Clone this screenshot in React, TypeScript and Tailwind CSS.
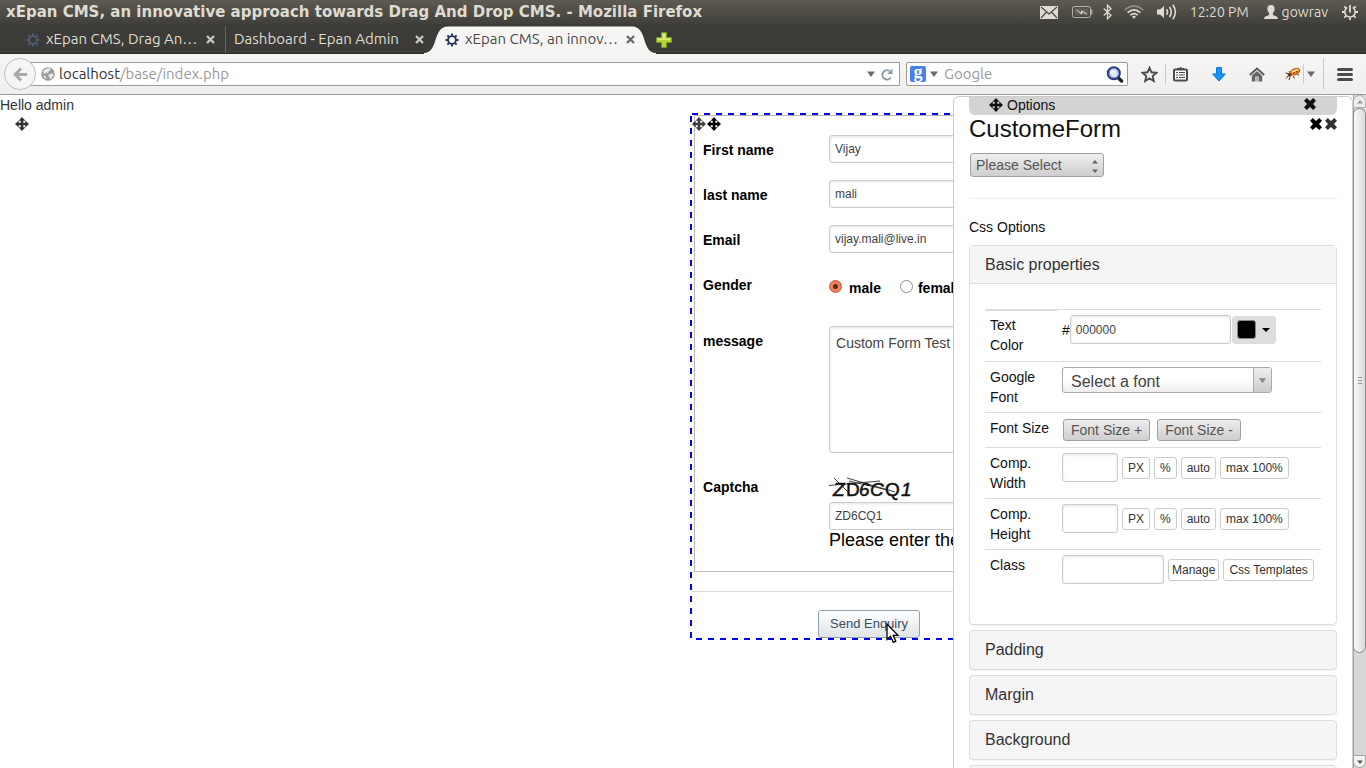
import React from 'react';

const UI_FONT = "font-['Ubuntu','Noto_Sans',sans-serif]";

/* ---------- Icons ---------- */

function MoveIcon({ className = '' }: { className?: string }) {
  return (
    <svg className={className} width="14" height="14" viewBox="0 0 14 14" fill="currentColor" aria-hidden="true">
      <path d="M7 0 10.500 3.700H8.300V5.700H10.300V3.500L14 7 10.300 10.500V8.300H8.300V10.300H10.500L7 14 3.500 10.300H5.700V8.300H3.700V10.500L0 7 3.700 3.500V5.700H5.700V3.700H3.500Z" />
    </svg>
  );
}

function RemoveIcon({ className = '' }: { className?: string }) {
  return (
    <svg className={className} width="12" height="12" viewBox="0 0 12 12" fill="currentColor" aria-hidden="true">
      <path d="M2.800 0 6 3 9.200 0 12 2.700 9 6 12 9.300 9.200 12 6 9 2.800 12 0 9.300 3 6 0 2.700Z" />
    </svg>
  );
}

function TabClose({ color }: { color: string }) {
  return (
    <svg width="9" height="9" viewBox="0 0 9 9" stroke={color} strokeWidth="2.4" aria-hidden="true">
      <path d="M1 1 8 8M8 1 1 8" />
    </svg>
  );
}

function GearIcon({ color }: { color: string }) {
  return (
    <svg width="14" height="14" viewBox="0 0 14 14" fill="none" stroke={color} aria-hidden="true">
      <circle cx="7" cy="7" r="3.9" strokeWidth="1.9" />
      <path
        strokeWidth="2"
        d="M7 .5V3M7 11v2.500M.5 7H3M11 7h2.500M2.400 2.400 4.200 4.200M9.800 9.800l1.800 1.800M2.400 11.600 4.200 9.800M9.800 4.200l1.800-1.800"
      />
    </svg>
  );
}

function Caret({ color = '#6b6b6b', size = 7 }: { color?: string; size?: number }) {
  return (
    <svg width={size} height={size} viewBox="0 0 8 8" fill={color} aria-hidden="true">
      <path d="M0 1.500H8L4 7Z" />
    </svg>
  );
}

function MailIcon() {
  return (
    <svg width="18" height="13" viewBox="0 0 18 13" aria-hidden="true">
      <rect width="18" height="13" fill="#dfdbd2" />
      <path d="M1 1 9 8 17 1M1 12 6.500 6M17 12 11.500 6" fill="none" stroke="#4b4943" strokeWidth="1.200" />
    </svg>
  );
}

function BatteryIcon() {
  return (
    <svg width="21" height="12" viewBox="0 0 21 12" fill="none" stroke="#dfdbd2" aria-hidden="true">
      <rect x=".5" y=".5" width="18" height="11" rx="2" strokeOpacity=".7" />
      <rect x="2.500" y="2.500" width="14" height="7" fill="#8a877f" stroke="none" opacity=".35" />
      <path d="M19.500 3.500v5" strokeWidth="2" strokeOpacity=".6" />
      <path d="M4.500 4 9 7.200 9.800 4.800 15 8.200 10.500 5.600 9.700 8Z" fill="#f5f2ea" strokeWidth=".6" />
    </svg>
  );
}

function BluetoothIcon() {
  return (
    <svg width="9" height="16" viewBox="0 0 9 16" fill="none" stroke="#dfdbd2" strokeWidth="1.300" aria-hidden="true">
      <path d="M.7 4.500 8 11.300 4.500 14.800V1.200L8 4.700.7 11.500" />
    </svg>
  );
}

function WifiIcon() {
  return (
    <svg width="20" height="14" viewBox="0 0 20 14" fill="none" stroke="#dfdbd2" strokeWidth="1.700" aria-hidden="true">
      <path d="M.8 5Q10-3 19.200 5" strokeOpacity=".4" />
      <path d="M3.600 7.600Q10 2 16.400 7.600" />
      <path d="M6.300 10.200Q10 7 13.700 10.200" />
      <path d="M8 11.500Q10 10 12 11.500L10 13.800Z" fill="#dfdbd2" stroke="none" />
    </svg>
  );
}

function SoundIcon() {
  return (
    <svg width="20" height="16" viewBox="0 0 20 16" fill="none" stroke="#dfdbd2" strokeWidth="1.600" aria-hidden="true">
      <path d="M0 5.500H3L7 2V14L3 10.500H0Z" fill="#dfdbd2" stroke="none" />
      <path d="M9.500 5.300Q11.500 8 9.500 10.700M12.500 3Q16 8 12.500 13M15.800.8Q21 8 15.800 15.200" />
    </svg>
  );
}

function PersonIcon() {
  return (
    <svg width="14" height="14" viewBox="0 0 14 14" fill="#dfdbd2" aria-hidden="true">
      <path d="M7 0C9.600 0 10.600 1.500 10.600 3.700 10.600 5.800 9.900 7 8.900 8V9.800C9.700 10.800 14 10.800 14 14H0C0 10.800 4.300 10.800 5.100 9.800V8C4.100 7 3.400 5.800 3.400 3.700 3.400 1.500 4.400 0 7 0Z" />
    </svg>
  );
}

function PowerGearIcon() {
  return (
    <svg width="16" height="16" viewBox="0 0 16 16" fill="none" stroke="#dfdbd2" aria-hidden="true">
      <path d="M5.300 3.400A5.200 5.200 0 1 0 10.700 3.400" strokeWidth="1.600" />
      <path d="M8 1V8.500" strokeWidth="1.800" />
      <path
        d="M0 8H2.500M13.500 8H16M8 13.500V16M2.300 2.300 4.400 4.400M11.600 4.400 13.700 2.300M2.300 13.700 4.200 11.800M11.800 11.800 13.700 13.700"
        strokeWidth="1.800"
      />
    </svg>
  );
}

function PlusIcon() {
  return (
    <svg width="16" height="16" viewBox="0 0 16 16" aria-hidden="true">
      <path d="M5.500.5h5v5h5v5h-5v5h-5v-5h-5v-5h5Z" fill="#b5d334" stroke="#6d9a1f" />
      <path d="M6.500 1.500h3v5h5v1.500h-13v-1.500h5Z" fill="#dcea7d" />
    </svg>
  );
}

function GlobeIcon() {
  return (
    <svg width="14" height="14" viewBox="0 0 14 14" aria-hidden="true">
      <circle cx="7" cy="7" r="6.800" fill="#9a9a9a" />
      <path d="M5.500 1.500 9 1l1 1.500L8 4 7 6 5 5.500 4 7 2.500 6 2 4ZM8.500 7 12 6.500 12.500 8 10 12 9 12.500 8.500 10 7 9ZM2 8.500 4.500 9 5.500 12 3.500 11Z" fill="#e9e9e9" />
    </svg>
  );
}

function ReloadIcon() {
  return (
    <svg width="12" height="13" viewBox="0 0 12 13" fill="none" aria-hidden="true">
      <path d="M9.800 9.500A4.600 4.600 0 1 1 8.500 3" stroke="#8e9ba8" strokeWidth="2" />
      <path d="M11.500.5V6H6Z" fill="#8e9ba8" />
    </svg>
  );
}

function MagnifierIcon() {
  return (
    <svg width="18" height="17" viewBox="0 0 18 17" fill="none" aria-hidden="true">
      <path d="M12 11.500 15.500 15" stroke="#222" strokeWidth="3.500" strokeLinecap="round" />
      <circle cx="7.800" cy="7.200" r="6" fill="#e4e9f7" stroke="#27357f" strokeWidth="2" />
      <circle cx="7.800" cy="7.200" r="4.500" stroke="#7d8fd0" strokeWidth="1.200" />
      <path d="M5.500 7A2.500 2.500 0 0 1 8 4.700" stroke="#fff" strokeWidth="1.300" />
    </svg>
  );
}

function StarIcon() {
  return (
    <svg width="17" height="17" viewBox="0 0 17 17" fill="none" stroke="#4c4c4c" strokeWidth="1.900" aria-hidden="true">
      <path d="M8.500 1.800 10.500 6.300 15.400 6.800 11.700 10.100 12.800 15 8.500 12.400 4.200 15 5.300 10.100 1.600 6.800 6.500 6.300Z" />
    </svg>
  );
}

function ListIcon() {
  return (
    <svg width="15" height="16" viewBox="0 0 15 16" aria-hidden="true">
      <rect x="1" y="3.500" width="13" height="11" rx="1" fill="#fff" stroke="#4c4c4c" strokeWidth="2" />
      <path d="M4 4V2H6Q7.500 0 9 2h2V4Z" fill="#4c4c4c" />
      <path d="M3 6.500H5M3 9H5M3 11.500H5M6 6.500h6M6 9h6M6 11.500h6" stroke="#4c4c4c" strokeWidth="1.200" />
    </svg>
  );
}

function DownloadIcon() {
  return (
    <svg width="14" height="15" viewBox="0 0 14 15" aria-hidden="true">
      <path d="M4.500.6h5v6.400h3.800L7 14 .7 7h3.800Z" fill="#1793ff" stroke="#0b76d8" />
    </svg>
  );
}

function HomeIcon() {
  return (
    <svg width="16" height="15" viewBox="0 0 16 15" aria-hidden="true">
      <path d="M.8 8 8 1.500 15.200 8" fill="none" stroke="#555" strokeWidth="1.700" />
      <path d="M2.800 8.700 8 4.100 13.200 8.700V14.500H9.600V9.500H6.400V14.500H2.800Z" fill="#666" />
      <path d="M8 9.500V14.500" stroke="#777" />
    </svg>
  );
}

function BugIcon() {
  return (
    <svg width="16" height="14" viewBox="0 0 16 14" fill="none" aria-hidden="true">
      <path d="M3 9 1 11.500M5 10 4 13M8 9 9.500 11.500M3 6.500.5 6M5 5.500 4 4M12 7l2 1.500" stroke="#3d2a1a" strokeWidth=".9" />
      <ellipse cx="10" cy="4.700" rx="5.200" ry="3" transform="rotate(-22 10 4.700)" fill="#f08a1d" stroke="#a8480c" strokeWidth=".7" />
      <path d="M7 5 13 2.500" stroke="#ffe08a" strokeWidth="1.600" />
      <circle cx="9" cy="6" r=".8" fill="#5b2c12" />
      <circle cx="12" cy="4.800" r=".8" fill="#5b2c12" />
      <circle cx="4.600" cy="7.800" r="2" fill="#6a3011" />
    </svg>
  );
}

/* ---------- Browser chrome ---------- */

function TitleBar() {
  return (
    <header
      className={`flex h-6 shrink-0 items-center justify-between bg-linear-to-b from-[#5d5b51] to-[#403f3a] pr-2 pl-1.5 text-sm text-[#dfdbd2] ${UI_FONT}`}
    >
      <h1 className="truncate font-['DejaVu_Sans',sans-serif] text-[15px] leading-6 font-bold">
        xEpan CMS, an innovative approach towards Drag And Drop CMS. - Mozilla Firefox
      </h1>
      <div className="flex shrink-0 items-center">
        <span className="mr-3.5"><MailIcon /></span>
        <span className="mr-2.5"><BatteryIcon /></span>
        <span className="mr-3"><BluetoothIcon /></span>
        <span className="mr-[13px]"><WifiIcon /></span>
        <span className="mr-[13px]"><SoundIcon /></span>
        <span className="mr-[15px]">12:20 PM</span>
        <span className="mr-1"><PersonIcon /></span>
        <span className="mr-3.5">gowrav</span>
        <PowerGearIcon />
      </div>
    </header>
  );
}

function TabBar() {
  return (
    <nav
      aria-label="Tabs"
      className={`flex h-[30px] shrink-0 items-center border-b border-[#2c2b28] bg-[#3c3b37] pt-[2px] text-[15px] text-[#dfdbd2] ${UI_FONT}`}
    >
      <div className="flex h-full w-[226px] items-center border-r border-[#66655d] pr-2.5 pl-[26px]">
        <span className="opacity-60"><GearIcon color="#5d739c" /></span>
        <a href="#cms" className="ml-1.5 flex-1 truncate">xEpan CMS, Drag An…</a>
        <button aria-label="Close tab"><TabClose color="#c9c6bd" /></button>
      </div>
      <div className="flex h-full w-[198px] items-center pl-2">
        <a href="#dashboard" className="flex-1 truncate">Dashboard - Epan Admin</a>
        <button aria-label="Close tab"><TabClose color="#c9c6bd" /></button>
      </div>
      <div className="relative flex h-full w-[232px] items-center pr-[21px] pl-[21px] text-[#4a4a48]">
        <svg
          className="absolute top-0 left-0 h-7 w-full"
          viewBox="0 0 232 28"
          preserveAspectRatio="none"
          aria-hidden="true"
        >
          <path d="M0 28V27C15 27 8 .5 24 .5H208C224 .5 217 27 232 27V28Z" fill="#f6f5f4" />
        </svg>
        <span className="relative"><GearIcon color="#2d3a56" /></span>
        <a href="#innovative" className="relative ml-1.5 flex-1 truncate">xEpan CMS, an innov…</a>
        <button aria-label="Close tab" className="relative"><TabClose color="#6b6a66" /></button>
      </div>
      <button aria-label="New tab"><PlusIcon /></button>
    </nav>
  );
}

function NavBar() {
  return (
    <div
      className={`flex h-[41px] shrink-0 items-center border-b border-[#9b9a97] bg-linear-to-b from-[#f6f5f4] to-[#f0efed] pr-[13px] pl-1 text-[15px] ${UI_FONT}`}
    >
      <button
        aria-label="Back"
        className="z-10 flex size-8 shrink-0 items-center justify-center rounded-full border border-[#b9c0c8] bg-[#f5f5f4]"
      >
        <svg width="15" height="15" viewBox="0 0 15 15" fill="none" stroke="#a8a8a8" strokeWidth="3" aria-hidden="true">
          <path d="M8 1.500 2.200 7.500 8 13.500M2.500 7.500H14" />
        </svg>
      </button>
      <div className="-ml-2 flex h-6 min-w-0 flex-1 items-center border border-[#9b9a97] bg-white pr-1.5 pl-3">
        <GlobeIcon />
        <span className="ml-1 flex-1 text-[#9a9a9a]">
          <span className="text-[#333]">localhost</span>/base/index.php
        </span>
        <span className="mr-1.5"><Caret size={8} /></span>
        <button aria-label="Reload"><ReloadIcon /></button>
      </div>
      <div className="ml-1.5 flex h-6 w-[222px] shrink-0 items-center rounded-xs border border-[#9b9a97] bg-white px-[3px]">
        <span className="flex size-4 items-center justify-center rounded-xs bg-[#4a7df0] pb-1 font-['Liberation_Serif',serif] text-lg leading-4 font-bold text-white">
          g
        </span>
        <span className="mx-1"><Caret size={8} /></span>
        <input
          aria-label="Search"
          placeholder="Google"
          className="ml-0.5 min-w-0 flex-1 bg-transparent outline-none placeholder:text-[#9a9a9a]"
        />
        <button aria-label="Search the web"><MagnifierIcon /></button>
      </div>
      <div className="ml-[13px] flex shrink-0 items-center">
        <button aria-label="Bookmark"><StarIcon /></button>
        <span className="mx-[7px] h-5 w-px bg-[#c6cbd1]" />
        <button aria-label="Bookmarks list"><ListIcon /></button>
        <button aria-label="Downloads" className="ml-6"><DownloadIcon /></button>
        <button aria-label="Home" className="ml-[23px]"><HomeIcon /></button>
        <button aria-label="Debugger" className="ml-5"><BugIcon /></button>
        <span className="mr-[3px] ml-0.5 h-5 w-px bg-[#c6cbd1]" />
        <Caret size={8} />
        <span className="mr-[13px] ml-2 h-8 w-px bg-[#c6cbd1]" />
        <button aria-label="Menu" className="flex w-4 flex-col gap-[2px]">
          <span className="h-[3px] rounded-xs bg-[#4c4c4c]" />
          <span className="h-[3px] rounded-xs bg-[#4c4c4c]" />
          <span className="h-[3px] rounded-xs bg-[#4c4c4c]" />
        </button>
      </div>
    </div>
  );
}

function PageScrollbar() {
  return (
    <div className="flex w-[13px] shrink-0 flex-col bg-[#d9d7d5] shadow-[inset_1px_0_0_#a3a19e]" aria-hidden="true">
      <div className="flex h-[13px] items-center justify-center rounded-t-lg border border-[#b5b3b0] bg-[#eeedeb]">
        <svg width="6" height="4" viewBox="0 0 6 4" fill="#999"><path d="M3 0 6 3.500H0Z" /></svg>
      </div>
      <div className="flex basis-[545px] shrink flex-col items-center justify-center gap-[2px] rounded-lg border border-[#8e8c89] bg-linear-to-r from-[#fafafa] to-[#dcdad8]">
        <span className="h-px w-1 bg-[#9b9a97]" />
        <span className="h-px w-1 bg-[#9b9a97]" />
        <span className="h-px w-1 bg-[#9b9a97]" />
      </div>
      <div className="flex-1" />
      <div className="flex h-[13px] shrink-0 items-center justify-center rounded-b-lg border border-[#a3a19e] bg-[#f4f3f2]">
        <svg width="6" height="4" viewBox="0 0 6 4" fill="#555"><path d="M3 4 6 .5H0Z" /></svg>
      </div>
    </div>
  );
}

/* ---------- Enquiry form ---------- */

const FIELD = 'rounded-[3px] border border-[#ccc] bg-white text-[#444] shadow-[inset_0_1px_3px_#e2e2e2] outline-none';

function FormRow({ label, id, children }: { label: string; id?: string; children: React.ReactNode }) {
  return (
    <div className="flex items-start">
      <label htmlFor={id} className="w-[126px] shrink-0 pt-[5px] text-sm leading-5 font-bold text-black">
        {label}
      </label>
      <div className="min-w-0 flex-1">{children}</div>
    </div>
  );
}

function TextRow({ label, id, value }: { label: string; id: string; value: string }) {
  return (
    <FormRow label={label} id={id}>
      <input id={id} defaultValue={value} className={`mb-[17px] block h-7 w-full px-[5px] text-xs ${FIELD}`} />
    </FormRow>
  );
}

const RADIO =
  'size-[13px] shrink-0 appearance-none rounded-full border border-[#8f8d8a] bg-white checked:border-[#b5573a] checked:bg-[radial-gradient(circle,#5d2a18_0_2px,#f0825a_3px)]';

function EnquiryForm() {
  return (
    <form
      className="relative bg-no-repeat pt-[2px] pb-[2px] pl-[2px] [background-image:repeating-linear-gradient(90deg,#00f_0_6px,transparent_6px_12px),repeating-linear-gradient(90deg,#00f_0_6px,transparent_6px_12px),repeating-linear-gradient(180deg,#00f_0_6px,transparent_6px_12px)] [background-position:2px_0,6px_100%,0_3px] [background-size:100%_2px,100%_2px,2px_100%]"
      onSubmit={(e) => e.preventDefault()}
    >
      <div className="absolute top-1 left-[2px] flex gap-px text-black">
        <MoveIcon className="opacity-75" />
        <MoveIcon />
      </div>
      <div className="ml-[2px] border border-[#bbb] pt-[19px] pr-2 pb-[21px] pl-2">
        <TextRow label="First name" id="first-name" value="Vijay" />
        <TextRow label="last name" id="last-name" value="mali" />
        <TextRow label="Email" id="email" value="vijay.mali@live.in" />
        <FormRow label="Gender">
          <div className="flex h-14 items-start gap-[19px] pt-2 text-sm leading-5 font-bold text-black">
            <label className="flex gap-[7px]">
              <input type="radio" name="gender" defaultChecked className={RADIO + ' mt-[2px]'} />
              male
            </label>
            <label className="flex gap-[5px]">
              <input type="radio" name="gender" className={RADIO + ' mt-[2px]'} />
              female
            </label>
          </div>
        </FormRow>
        <FormRow label="message" id="message">
          <textarea
            id="message"
            defaultValue="Custom Form Test"
            className={`mb-[19px] block h-[127px] w-full resize-none px-1.5 py-1.5 text-sm leading-5 ${FIELD}`}
          />
        </FormRow>
        <FormRow label="Captcha" id="captcha">
          <svg width="90" height="30" viewBox="0 0 90 30" className="block" role="img" aria-label="Captcha code">
            <g
              fill="#111"
              stroke="#111"
              strokeWidth=".5"
              fontFamily="'Liberation Sans', sans-serif"
              fontSize="19"
            >
              <text x="4" y="24" fontStyle="italic">Z</text>
              <text x="17" y="24">D</text>
              <text x="30" y="24" fontStyle="italic">6</text>
              <text x="41" y="24" fontStyle="italic">C</text>
              <text x="56" y="24">Q</text>
              <text x="72" y="24" fontStyle="italic">1</text>
            </g>
            <path
              d="M0 13.500 51 9M5 6 21 22M18 6 66 20M20 9 42 14M34 12 58 18"
              fill="none"
              stroke="#111"
              strokeWidth=".8"
            />
          </svg>
          <input id="captcha" defaultValue="ZD6CQ1" className={`block h-7 w-full px-[5px] text-xs ${FIELD}`} />
          <p className="truncate text-lg leading-5 text-black">Please enter the</p>
        </FormRow>
      </div>
      <hr className="mt-[19px] border-[#ddd]" />
      <div className="pt-[18px] pl-[126px]">
        <button
          type="submit"
          className="block h-7 rounded-[3px] border border-[#92a0b3] bg-linear-to-b from-white to-[#dfe4e8] px-[11px] text-[13px] text-[#3f4c5a]"
        >
          Send Enquiry
        </button>
      </div>
      <svg
        className="absolute bottom-[-4px] left-[196px]"
        width="14"
        height="21"
        viewBox="0 0 14 21"
        fill="#fff"
        stroke="#000"
        strokeWidth="1.300"
        aria-hidden="true"
      >
        <path d="M1 1V16.500L4.500 13.300 7.300 19.300 9.800 18.200 7.200 12.300H12Z" />
      </svg>
    </form>
  );
}

/* ---------- Options panel ---------- */

const GREY_BUTTON =
  'rounded-[3px] border border-[#a0a0a0] bg-linear-to-b from-[#eee] to-[#cecece] text-[#555]';
const SMALL_BUTTON = 'h-[22px] rounded-[3px] border border-[#ccc] bg-white text-xs text-[#333]';

function Row({ label, htmlFor, children }: { label: string; htmlFor?: string; children: React.ReactNode }) {
  return (
    <tr className="border-t border-[#ddd] first:h-[52px]">
      <th scope="row" className="w-[72px] px-[5px] py-[5px] text-left align-top font-normal">
        <label htmlFor={htmlFor}>{label}</label>
      </th>
      <td className="p-0 pt-[5px] pl-[5px] align-top">{children}</td>
    </tr>
  );
}

function SizeControls({ id }: { id: string }) {
  return (
    <div className="flex items-center gap-1">
      <input id={id} className={`h-[29px] w-14 px-[5px] text-xs ${FIELD}`} />
      <button className={`px-[5px] ${SMALL_BUTTON}`}>PX</button>
      <button className={`px-[5px] ${SMALL_BUTTON}`}>%</button>
      <button className={`px-[5px] ${SMALL_BUTTON}`}>auto</button>
      <button className={`px-[5px] ${SMALL_BUTTON}`}>max 100%</button>
    </div>
  );
}

function AccordionItem({ title }: { title?: string }) {
  return (
    <section className="mt-[5px] rounded border border-[#ddd] bg-[#f5f5f5] shadow-[0_1px_1px_rgba(0,0,0,0.05)]">
      <h3>
        <button className="block h-[38px] w-full px-[15px] text-left text-base text-[#333]">{title}</button>
      </h3>
    </section>
  );
}

function OptionsPanel() {
  return (
    <aside className="absolute top-px right-0 bottom-0 w-[400px] overflow-hidden rounded-t-md border border-b-0 border-[#ccc] bg-white px-[15px] text-sm leading-5 text-[#111]">
      <div className="-mt-[2px] flex h-5 items-center rounded-b-md bg-[#d3d3d3] pr-[21px] pl-5">
        <MoveIcon />
        <span className="ml-1 flex-1">Options</span>
        <button aria-label="Close options" className="-mt-0.5"><RemoveIcon /></button>
      </div>
      <div className="flex items-start justify-between">
        <h2 className="text-2xl leading-7">CustomeForm</h2>
        <div className="flex gap-[3px] pt-[3px] text-black">
          <button aria-label="Remove component"><RemoveIcon /></button>
          <button aria-label="Close component" className="opacity-80"><RemoveIcon /></button>
        </div>
      </div>
      <div className="relative mt-2.5 ml-px w-[134px]">
        <select aria-label="Component type" className={`block h-6 w-full appearance-none px-[5px] ${GREY_BUTTON}`}>
          <option>Please Select</option>
        </select>
        <svg
          className="pointer-events-none absolute top-[7px] right-1.5"
          width="6"
          height="13"
          viewBox="0 0 6 13"
          fill="#666"
          aria-hidden="true"
        >
          <path d="M3 0 6 3.500H0ZM0 9.500H6L3 13Z" />
        </svg>
      </div>
      <hr className="mt-[21px] border-[#eee]" />
      <p className="mt-[18px]">Css Options</p>

      <section className="mt-2 rounded border border-[#ddd] shadow-[0_1px_1px_rgba(0,0,0,0.05)]">
        <h3 className="border-b border-[#ddd] bg-[#f5f5f5]">
          <button className="block h-[37px] w-full px-[15px] text-left text-base text-[#333]">Basic properties</button>
        </h3>
        <div className="px-[15px] pt-[25px] pb-10">
          <div className="-mb-[2px] h-[2px] w-[72px] bg-[#ddd]" />
          <table className="w-full border-collapse">
            <tbody>
              <Row label="Text Color" htmlFor="text-color">
                <div className="flex items-center">
                  <span>#</span>
                  <input
                    id="text-color"
                    defaultValue="000000"
                    className={`h-[29px] w-[161px] px-[5px] text-xs ${FIELD}`}
                  />
                  <button
                    aria-label="Pick colour"
                    className="ml-px flex h-7 w-11 items-center justify-center gap-1.5 rounded bg-[#ddd]"
                  >
                    <span className="size-[19px] rounded-[3px] border border-[#888] bg-black" />
                    <svg width="8" height="4" viewBox="0 0 8 4" aria-hidden="true"><path d="M0 0H8L4 4Z" /></svg>
                  </button>
                </div>
              </Row>
              <Row label="Google Font" htmlFor="google-font">
                <div className="relative w-[210px]">
                  <select
                    id="google-font"
                    className="block h-[26px] w-full appearance-none rounded-[3px] border border-[#aaa] bg-linear-to-b from-white from-50% to-[#eee] pt-1 pr-6 pl-2 text-base leading-5 text-[#444]"
                  >
                    <option>Select a font</option>
                  </select>
                  <span className="pointer-events-none absolute inset-y-px right-px flex w-[18px] items-center justify-center rounded-r-xs border-l border-[#aaa] bg-linear-to-b from-[#eee] to-[#ccc]">
                    <Caret color="#888" size={7} />
                  </span>
                </div>
              </Row>
              <Row label="Font Size">
                <div className="flex gap-[7px] pt-px pb-1.5 pl-px">
                  <button className={`h-[22px] px-[7px] ${GREY_BUTTON}`}>Font Size +</button>
                  <button className={`h-[22px] px-[7px] ${GREY_BUTTON}`}>Font Size -</button>
                </div>
              </Row>
              <Row label="Comp. Width" htmlFor="comp-width">
                <SizeControls id="comp-width" />
              </Row>
              <Row label="Comp. Height" htmlFor="comp-height">
                <SizeControls id="comp-height" />
              </Row>
              <Row label="Class" htmlFor="css-class">
                <div className="flex items-center gap-1">
                  <input id="css-class" className={`h-[29px] w-[102px] px-[5px] text-xs ${FIELD}`} />
                  <button className={`px-[3px] ${SMALL_BUTTON}`}>Manage</button>
                  <button className={`px-[5px] ${SMALL_BUTTON}`}>Css Templates</button>
                </div>
              </Row>
            </tbody>
          </table>
        </div>
      </section>

      <AccordionItem title="Padding" />
      <AccordionItem title="Margin" />
      <AccordionItem title="Background" />
      <AccordionItem />
    </aside>
  );
}

export default function App() {
  return (
    <div className="flex h-screen flex-col overflow-hidden bg-white font-['Liberation_Sans',Arial,sans-serif]">
      <TitleBar />
      <TabBar />
      <NavBar />
      <div className="flex min-h-0 flex-1">
        <main className="relative min-w-0 flex-1 overflow-hidden">
          <p className="h-[18px] text-sm leading-5 text-[#333]">Hello admin</p>
          <div className="flex items-start">
            <div className="w-[51%] shrink-0 pt-1 pl-[15px] text-[#333]">
              <MoveIcon />
            </div>
            <div className="min-w-0 flex-1">
              <EnquiryForm />
            </div>
          </div>
          <OptionsPanel />
        </main>
        <PageScrollbar />
      </div>
    </div>
  );
}
